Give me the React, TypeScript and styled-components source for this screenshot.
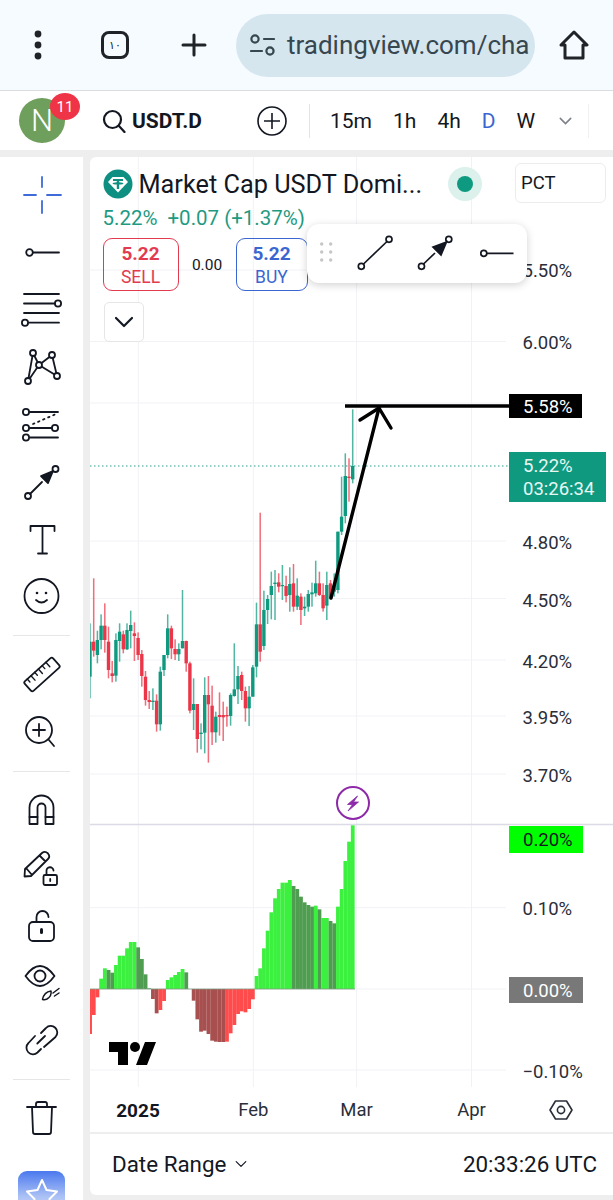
import React from "react";
import styled, { createGlobalStyle } from "styled-components";

const GlobalStyle = createGlobalStyle`
  html, body {
    margin: 0;
    width: 613px;
    height: 1200px;
    overflow: hidden;
    background: #eeeeee;
    font-family: Roboto, "Liberation Sans", sans-serif;
    color: #131722;
  }
`;

const Page = styled.div`
  width: 613px;
  height: 1200px;
  display: flex;
  flex-direction: column;
  overflow: hidden;
`;

/* browser chrome */
const BrowserBar = styled.div`
  height: 91px;
  flex: none;
  box-sizing: border-box;
  background: #f5fbff;
  border-bottom: 1px solid #d9dde0;
  display: flex;
  align-items: center;
`;

const ChromeIcon = styled.svg<{ $left?: number }>`
  flex: none;
  display: block;
  margin-left: ${(p) => p.$left ?? 0}px;
`;

const TabCount = styled.div`
  width: 28px;
  height: 28px;
  flex: none;
  margin-left: 56px;
  border: 3px solid #202428;
  border-radius: 8px;
  box-sizing: border-box;
  display: flex;
  align-items: center;
  justify-content: center;
  font-family: "DejaVu Sans", sans-serif;
  font-size: 11px;
  color: #202428;
`;

const UrlPill = styled.div`
  width: 299px;
  height: 63px;
  flex: none;
  margin-left: 29px;
  padding-left: 14px;
  box-sizing: border-box;
  border-radius: 32px;
  background: #d6e6ef;
  display: flex;
  align-items: center;
  gap: 12px;
`;

const UrlText = styled.span`
  font-size: 26px;
  color: #37474f;
  white-space: nowrap;
`;

/* chart header */
const HeaderBar = styled.div`
  height: 59px;
  flex: none;
  background: #ffffff;
  display: flex;
  align-items: center;
  position: relative;
`;

const Avatar = styled.div`
  width: 46px;
  height: 45px;
  margin-left: 19px;
  flex: none;
  border-radius: 50%;
  background: #6f9f5c;
  color: #ffffff;
  font-size: 31px;
  font-weight: 300;
  display: flex;
  align-items: center;
  justify-content: center;
  position: relative;
`;

const Badge = styled.span`
  position: absolute;
  left: 31px;
  top: -5px;
  width: 30px;
  height: 27px;
  border-radius: 50%;
  background: #ee3446;
  font-size: 15px;
  font-weight: 400;
  display: flex;
  align-items: center;
  justify-content: center;
`;

const SymbolText = styled.span`
  font-size: 21px;
  font-weight: 700;
  margin-left: 6px;
  width: 73px;
`;

const HeaderDivider = styled.span<{ $left: number; $tone: string }>`
  width: 1px;
  height: 34px;
  flex: none;
  margin-left: ${(p) => p.$left}px;
  background: ${(p) => p.$tone};
`;

const Intervals = styled.div`
  display: flex;
  gap: 21px;
  margin-left: 20px;
`;

const Interval = styled.span<{ $active?: boolean }>`
  font-size: 21px;
  color: ${(p) => (p.$active ? "#3b66d0" : "#131722")};
`;

const Gutter = styled.div`
  height: 7px;
  flex: none;
  background: #eeeeee;
`;

const Body = styled.div`
  flex: 1;
  display: flex;
  min-height: 0;
`;

/* left drawing tools */
const Sidebar = styled.div`
  width: 83px;
  flex: none;
  background: #ffffff;
  padding-top: 9px;
  box-sizing: border-box;
  display: flex;
  flex-direction: column;
`;

const ToolSlot = styled.div<{ $h: number }>`
  height: ${(p) => p.$h}px;
  flex: none;
  display: flex;
  align-items: center;
`;

const SideDivider = styled.div<{ $top: number; $bottom: number }>`
  height: 1px;
  flex: none;
  margin: ${(p) => p.$top}px 13px ${(p) => p.$bottom}px;
  background: #e6e6e6;
`;

const StarButton = styled.div`
  width: 47px;
  height: 50px;
  flex: none;
  margin: 24px 0 0 18px;
  border-radius: 9px;
  background: linear-gradient(180deg, #4a78ee 0%, #a9c0f5 50%, #e4ebfb 100%);
  display: flex;
  justify-content: center;
  padding-top: 7px;
  box-sizing: border-box;
`;

const ToolIcon = styled.svg.attrs({
  width: 83,
  height: 56,
  viewBox: "0 0 83 56",
  fill: "none",
  stroke: "#131722",
  strokeWidth: 1.8,
  strokeLinecap: "round",
  strokeLinejoin: "round",
})`
  display: block;
`;

/* chart */
const ChartColumn = styled.div`
  flex: 1;
  margin-left: 7px;
  display: flex;
  flex-direction: column;
  min-width: 0;
`;

const ChartCanvas = styled.div`
  height: 975px;
  flex: none;
  position: relative;
  background: #ffffff;
  border-top-left-radius: 6px;
  overflow: hidden;
`;

const ChartSvg = styled.svg`
  position: absolute;
  inset: 0;
  display: block;
`;

const Legend = styled.div`
  position: absolute;
  left: 12.5px;
  top: 12px;
  display: flex;
  flex-direction: column;
`;

const TitleRow = styled.div`
  height: 30px;
  display: flex;
  align-items: center;
  gap: 6px;
`;

const TitleText = styled.span`
  width: 283px;
  font-size: 25.3px;
  white-space: nowrap;
`;

const StatusHalo = styled.span`
  width: 34px;
  height: 34px;
  margin-left: 20px;
  border-radius: 50%;
  background: #dcf0ec;
  display: flex;
  align-items: center;
  justify-content: center;
`;

const StatusDot = styled.span`
  width: 16px;
  height: 16px;
  border-radius: 50%;
  background: #0e9a81;
`;

const Values = styled.div`
  height: 24px;
  margin-top: 7px;
  font-size: 20.5px;
  line-height: 24px;
  color: #1f9a82;
  display: flex;
  gap: 10px;
  white-space: nowrap;
`;

const TradeRow = styled.div`
  margin-top: 8px;
  display: flex;
  align-items: center;
`;

const TradeButton = styled.div<{ $tone: string; $width: number }>`
  width: ${(p) => p.$width}px;
  height: 53px;
  box-sizing: border-box;
  border: 1.3px solid ${(p) => p.$tone};
  border-radius: 9px;
  color: ${(p) => p.$tone};
  display: flex;
  flex-direction: column;
  align-items: center;
  justify-content: center;
  gap: 3px;
`;

const TradePrice = styled.span`
  font-size: 19px;
  line-height: 21px;
  font-weight: 700;
`;

const TradeSide = styled.span`
  font-size: 17.5px;
  line-height: 20px;
`;

const Spread = styled.span`
  width: 57px;
  text-align: center;
  font-size: 15.5px;
`;

const CollapseButton = styled.div`
  width: 40px;
  height: 40px;
  margin: 11px 0 0 1px;
  box-sizing: border-box;
  border: 1px solid #e6e6e6;
  border-radius: 5px;
  background: #ffffff;
  display: flex;
  align-items: center;
  justify-content: center;
`;

const ScaleButton = styled.div`
  position: absolute;
  left: 425px;
  top: 6px;
  width: 91px;
  height: 40px;
  box-sizing: border-box;
  padding-left: 5px;
  border: 1px solid #ececec;
  border-radius: 6px;
  background: #ffffff;
  font-size: 18.5px;
  display: flex;
  align-items: center;
`;

const FloatingTools = styled.div`
  position: absolute;
  left: 217px;
  top: 67px;
  width: 220px;
  height: 59px;
  border-radius: 12px;
  background: #ffffff;
  box-shadow: 0 2px 8px rgba(0, 0, 0, 0.18);
  display: flex;
  align-items: center;
`;

const PriceLabel = styled.span<{ $top: number }>`
  position: absolute;
  left: 432.5px;
  top: ${(p) => p.$top}px;
  transform: translateY(-50%);
  font-size: 18.5px;
  line-height: 22px;
  color: #2a2e39;
`;

const PriceTag = styled.div<{ $top: number; $height: number; $width: number; $bg: string; $fg: string }>`
  position: absolute;
  left: 419px;
  top: ${(p) => p.$top}px;
  width: ${(p) => p.$width}px;
  height: ${(p) => p.$height}px;
  box-sizing: border-box;
  padding: 1.5px 0 0 14px;
  background: ${(p) => p.$bg};
  color: ${(p) => p.$fg};
  font-size: 18.5px;
  line-height: 22.5px;
  display: flex;
  flex-direction: column;
  justify-content: center;
`;

const TimeLabel = styled.span<{ $left: number; $bold?: boolean }>`
  position: absolute;
  left: ${(p) => p.$left}px;
  top: 953px;
  transform: translate(-50%, -50%);
  font-size: ${(p) => (p.$bold ? 19 : 18.5)}px;
  font-weight: ${(p) => (p.$bold ? 700 : 400)};
  color: ${(p) => (p.$bold ? "#131722" : "#2a2e39")};
`;

const AxisSettings = styled.svg`
  position: absolute;
  left: 459px;
  top: 943px;
  display: block;
`;

const BottomBar = styled.div`
  height: 61px;
  flex: none;
  margin-top: 2px;
  padding: 0 16px 2px 22px;
  box-sizing: border-box;
  background: #ffffff;
  border-radius: 0 0 0 6px;
  display: flex;
  align-items: center;
  justify-content: space-between;
  font-size: 22.4px;
`;

const DateRange = styled.span`
  display: flex;
  align-items: center;
  gap: 9px;
`;

// zoomed-in coordinates of the candles: [wick top, wick bottom, body top, body bottom, up]
// page y = 560 + v / 3
const candles: [number, number, number, number, number][] = [
  [190, 415, 245, 350, 1], [55, 290, 245, 272, 0], [212, 310, 240, 285, 1], [163, 268, 197, 240, 1],
  [130, 278, 197, 240, 0], [200, 355, 245, 330, 0], [303, 367, 340, 348, 0], [220, 365, 240, 347, 1],
  [190, 305, 215, 243, 1], [212, 280, 223, 268, 0], [190, 270, 210, 268, 1], [152, 265, 195, 213, 1],
  [187, 303, 220, 228, 0], [217, 300, 234, 285, 0], [270, 380, 282, 348, 0], [333, 437, 350, 420, 0],
  [393, 447, 420, 426, 0], [385, 450, 422, 426, 1], [403, 515, 422, 493, 0], [320, 512, 335, 493, 1],
  [285, 348, 285, 330, 1], [163, 295, 205, 285, 1], [197, 297, 205, 265, 0], [238, 300, 267, 283, 0],
  [250, 303, 267, 283, 1], [90, 265, 243, 265, 1], [242, 335, 243, 310, 0], [305, 460, 310, 452, 0],
  [355, 510, 432, 450, 1], [432, 578, 432, 537, 0], [490, 568, 518, 522, 1], [352, 580, 405, 518, 1],
  [348, 608, 405, 433, 0], [377, 555, 437, 517, 0], [455, 548, 470, 517, 1], [397, 527, 465, 471, 0],
  [425, 543, 465, 472, 0], [440, 500, 465, 469, 0], [400, 497, 405, 468, 1], [250, 410, 388, 408, 1],
  [318, 432, 348, 388, 1], [335, 420, 345, 393, 0], [380, 485, 393, 445, 0], [378, 498, 410, 445, 1],
  [315, 410, 322, 410, 1], [128, 352, 193, 320, 1], [-142, 305, 193, 275, 0], [92, 270, 150, 258, 1],
  [105, 192, 117, 150, 1], [35, 178, 78, 105, 1], [30, 180, 68, 72, 1], [40, 97, 67, 80, 0],
  [15, 120, 75, 78, 1], [47, 127, 78, 108, 0], [22, 155, 72, 105, 1], [12, 155, 70, 140, 0],
  [55, 150, 107, 140, 1], [100, 195, 110, 150, 0], [110, 168, 140, 145, 1], [90, 155, 102, 140, 1],
  [68, 140, 97, 103, 1], [2, 110, 70, 100, 1], [35, 108, 70, 105, 0], [70, 155, 105, 145, 0],
  [35, 180, 75, 137, 1], [60, 118, 70, 115, 0], [40, 110, 75, 95, 1], [-85, 100, -85, 90, 1],
  [-250, -75, -130, -85, 1], [-320, -110, -252, -132, 1], [-305, -175, -250, -246, 0], [-452, -230, -282, -242, 1],
];

// histogram bar ends, same kind of zoomed coordinates: page y = 790 + v / 3, zero line at 597
const histogram = [
  732, 675, 622, 566, 535, 540, 548, 525, 497, 497, 475, 456, 456, 472, 507, 553, 595, 627, 670, 660, 633, 570, 562, 555,
  546, 537, 547, 597, 632, 688, 725, 722, 732, 752, 755, 756, 756, 755, 730, 705, 672, 664, 667, 657, 628, 558, 535, 475,
  422, 367, 325, 297, 278, 278, 270, 288, 297, 320, 337, 345, 350, 347, 358, 384, 384, 393, 400, 350, 297, 213, 155, 106,
];
const fadedBars = new Set([5, 6, 13, 14, 15, 16, 17, 18, 26, 28, 29, 30, 31, 32, 33, 34, 35, 36, 55, 56, 57, 58, 59, 60, 62, 65, 66]);

const barX = (i: number) => 90 + i * 3.7;
const GREEN = "#0f9a80";
const RED = "#ea3648";

const priceGrid = [270, 341.5, 403, 541, 598.5, 660, 716, 774, 907.7, 989, 1070];
const timeGrid = [138.3, 253.3, 356.6, 471.5];
const prices: [string, number][] = [
  ["5.50%", 270], ["6.00%", 341.5], ["4.80%", 542], ["4.50%", 600], ["4.20%", 661], ["3.95%", 717], ["3.70%", 775],
  ["0.10%", 908], ["−0.10%", 1071],
];

function ChartDrawing() {
  return (
    <ChartSvg width={523} height={975} viewBox="90 157 523 975">
      {priceGrid.map((y) => (
        <line key={y} x1={90} x2={506} y1={y} y2={y} stroke="#f1f2f5" />
      ))}
      {timeGrid.map((x) => (
        <line key={x} x1={x} x2={x} y1={157} y2={1087} stroke="#f1f2f5" />
      ))}
      <line x1={90} x2={613} y1={824.5} y2={824.5} stroke="#dcdce8" strokeWidth={1.5} />

      {candles.map(([wickTop, wickBottom, bodyTop, bodyBottom, up], i) => {
        const color = up ? GREEN : RED;
        const x = barX(i);
        const top = 560 + bodyTop / 3;
        return (
          <g key={i} fill={color}>
            <rect x={x - 0.75} width={1.5} y={560 + wickTop / 3} height={(wickBottom - wickTop) / 3} opacity={0.72} />
            <rect x={x - 1.7} width={3.4} y={top} height={Math.max((bodyBottom - bodyTop) / 3, 1.2)} />
          </g>
        );
      })}

      <line x1={90} x2={508} y1={466} y2={466} stroke="#2a9d8a" strokeDasharray="1.5 2.5" />

      {histogram.map((v, i) => {
        const up = v < 597;
        const faded = fadedBars.has(i);
        const y = 790 + v / 3;
        const color = up ? (faded ? "#4f9d50" : "#3cf03f") : faded ? "#a84f50" : "#ff4b4b";
        return (
          <rect
            key={i}
            x={barX(i) - 1.85}
            width={3.8}
            y={up ? y : 989}
            height={Math.abs(y - 989)}
            fill={color}
          />
        );
      })}
      <line x1={90} x2={355} y1={989} y2={989} stroke="#7f9a7f" strokeWidth={0.8} />

      {/* marks drawn by hand on the chart */}
      <g stroke="#000000" strokeWidth={3.4} fill="none" strokeLinecap="round" strokeLinejoin="round">
        <line x1={345} x2={510} y1={406} y2={406} strokeLinecap="butt" />
        <path d="M331 598 L379 408" />
        <path d="M360 420 L379 408 L391 428" />
      </g>

      <circle cx={353} cy={803} r={16} fill="#ffffff" stroke="#8e2aa8" strokeWidth={2} />
      <path d="M357.5 796 L347.5 804.5 H352.5 L348 811 L358.5 802 H353.5 Z" fill="#8e2aa8" stroke="#8e2aa8" strokeWidth={0.8} strokeLinejoin="round" />

      {/* TradingView mark */}
      <path d="M109 1042 H128 V1065 H118 V1052 H109 Z M145 1042 H156 L147 1065 H136 Z" fill="#000000" />
      <circle cx={135} cy={1047} r={5} fill="#000000" />
    </ChartSvg>
  );
}

function TetherIcon() {
  return (
    <svg width={30} height={30} viewBox="0 0 30 30">
      <circle cx={15} cy={15} r={14.5} fill="#0f8f82" />
      <path d="M9.5 8 H20.5 L25 13 L15 23.5 L5 13 Z" fill="#ffffff" />
      <path d="M10 10 H20 V12 H16.2 V13.2 C18.5 13.3 20.4 13.8 20.4 14.4 C20.4 15 18.5 15.5 16.2 15.6 V20 H13.8 V15.6 C11.5 15.5 9.6 15 9.6 14.4 C9.6 13.8 11.5 13.3 13.8 13.2 V12 H10 Z" fill="#0f8f82" />
    </svg>
  );
}

function Chevron({ size, width = 2 }: { size: number; width?: number }) {
  return (
    <svg width={size} height={size / 2 + 2} viewBox="0 0 20 12" fill="none" stroke="#131722" strokeWidth={width} strokeLinecap="round" strokeLinejoin="round">
      <path d="M2 2 L10 10 L18 2" />
    </svg>
  );
}

function ToolRail() {
  return (
    <Sidebar>
      <ToolSlot $h={57.4}>
        <ToolIcon>
          <path d="M42 10 V20 M42 34 V46 M24 28 H36 M47 28 H61" stroke="#3f6bd8" />
        </ToolIcon>
      </ToolSlot>
      <ToolSlot $h={57.4}>
        <ToolIcon>
          <circle cx={29.5} cy={28.5} r={3.3} />
          <path d="M33 28.5 H59" />
        </ToolIcon>
      </ToolSlot>
      <ToolSlot $h={57.4}>
        <ToolIcon>
          <path d="M24 13 H59 M24 22.5 H55 M24 32 H59 M29 41.7 H59" />
          <circle cx={58} cy={22.5} r={3.1} />
          <circle cx={25} cy={41.7} r={3.1} />
        </ToolIcon>
      </ToolSlot>
      <ToolSlot $h={57.4}>
        <ToolIcon>
          <path d="M33 14 L28 42 L39 26 L33 14 M39 26 L52 16 L57 37 L39 26" />
          <circle cx={33} cy={14} r={3} fill="#fff" />
          <circle cx={52} cy={16} r={3} fill="#fff" />
          <circle cx={28} cy={42} r={3} fill="#fff" />
          <circle cx={57} cy={37} r={3} fill="#fff" />
          <circle cx={39} cy={26} r={3} fill="#fff" />
        </ToolIcon>
      </ToolSlot>
      <ToolSlot $h={57.4}>
        <ToolIcon>
          <path d="M30 16 H58 M30 32 H52 M30 41.5 H58" />
          <path d="M33 28 L56 18" strokeDasharray="1.5 4" />
          <circle cx={26} cy={16} r={3.1} />
          <circle cx={26} cy={32} r={3.1} />
          <circle cx={55} cy={32} r={3.1} />
          <circle cx={26} cy={41.5} r={3.1} />
        </ToolIcon>
      </ToolSlot>
      <ToolSlot $h={57.4}>
        <ToolIcon>
          <path d="M30 40 L42 28" />
          <path d="M53 17 L41 22 L48 29 Z" fill="#131722" />
          <circle cx={28} cy={42} r={3} />
          <circle cx={55.5} cy={15} r={3} />
        </ToolIcon>
      </ToolSlot>
      <ToolSlot $h={57.4}>
        <ToolIcon strokeWidth={1.6}>
          <path d="M30.5 20 V15 H54.5 V20 M42.5 15 V42.5 M38 42.5 H47" />
        </ToolIcon>
      </ToolSlot>
      <ToolSlot $h={57.4}>
        <ToolIcon>
          <circle cx={41.5} cy={28} r={17} />
          <circle cx={37} cy={25} r={1.3} fill="#131722" stroke="none" />
          <circle cx={46} cy={25} r={1.3} fill="#131722" stroke="none" />
          <path d="M36 32 Q41.5 37 47 32" />
        </ToolIcon>
      </ToolSlot>
      <SideDivider $top={10} $bottom={10} />
      <ToolSlot $h={55}>
        <ToolIcon>
          <g transform="rotate(-42 42 28.5)">
            <rect x={23} y={22} width={38} height={13} rx={2} />
            <path d="M28 22 V26 M33 22 V28 M38 22 V26 M43 22 V28 M48 22 V26 M53 22 V28" strokeWidth={1.4} />
          </g>
        </ToolIcon>
      </ToolSlot>
      <ToolSlot $h={55}>
        <ToolIcon>
          <circle cx={39} cy={29} r={13} />
          <path d="M39 23 V35 M33 29 H45 M48.5 38.5 L54 45" />
        </ToolIcon>
      </ToolSlot>
      <SideDivider $top={15} $bottom={8} />
      <ToolSlot $h={58}>
        <ToolIcon>
          <path d="M29.5 43 V26.5 a12 12 0 0 1 24 0 V43 H45.5 V26.5 a4 4 0 0 0 -8 0 V43 Z" />
          <path d="M29.5 36 H37.5 M45.5 36 H53.5" />
        </ToolIcon>
      </ToolSlot>
      <ToolSlot $h={58}>
        <ToolIcon>
          <path d="M24.5 37.5 L25 30 L42 14 Q45 11.5 48 14.5 Q50.5 17.5 48 20 L31 37 Z M26.5 29.5 L32 36 M39.5 16.5 L45.5 22.5" />
          <rect x={43.5} y={36} width={13.5} height={10} rx={1.5} />
          <path d="M46.5 36 V32 a3.5 3.5 0 0 1 7 -0.5" />
          <path d="M50.2 40 V42" />
        </ToolIcon>
      </ToolSlot>
      <ToolSlot $h={58}>
        <ToolIcon>
          <rect x={29} y={25} width={25} height={19} rx={4} />
          <path d="M36.5 25 V20 a6 6 0 0 1 12 0" />
          <path d="M41.5 32.5 V35.5" strokeWidth={3} />
        </ToolIcon>
      </ToolSlot>
      <ToolSlot $h={58}>
        <ToolIcon>
          <path d="M25.5 21 Q40 1 54.5 21 Q40 41 25.5 21 Z" />
          <circle cx={40} cy={21} r={5.5} />
          <path d="M42.5 44.5 Q44 37 51 36 Q52 41 47 44 Q45 45 42.5 44.5 Z M53 38 L59 33.5 M54.5 41 L59 38" strokeWidth={1.5} />
        </ToolIcon>
      </ToolSlot>
      <ToolSlot $h={58}>
        <ToolIcon strokeWidth={1.6}>
          <path d="M41 20 L46 15 a6.5 6.5 0 0 1 9.5 9 L44 34" />
          <path d="M35 23 L28.5 30 a6.5 6.5 0 0 0 9 9.5 L41 36" />
          <path d="M37.3 30.5 L45 23" />
        </ToolIcon>
      </ToolSlot>
      <SideDivider $top={9} $bottom={9} />
      <ToolSlot $h={58}>
        <ToolIcon>
          <path d="M27 17 H56 M36 17 V14 Q36 12 38 12 H45 Q47 12 47 14 V17 M32 17 L33 42 Q33 44 35 44 H49 Q51 44 51 42 L52 17" />
        </ToolIcon>
      </ToolSlot>
      <StarButton>
        <svg width={34} height={32} viewBox="0 0 34 32" fill="none" stroke="#ffffff" strokeWidth={2} strokeLinejoin="round">
          <path d="M17 2 L21.5 12 L32 13.5 L24.5 21 L26.5 31 L17 26 L7.5 31 L9.5 21 L2 13.5 L12.5 12 Z" />
        </svg>
      </StarButton>
    </Sidebar>
  );
}

function App() {
  return (
    <Page>
      <GlobalStyle />
      <BrowserBar>
        <ChromeIcon $left={31} width={14} height={30} viewBox="0 0 14 30">
          <circle cx={7} cy={4} r={3.4} fill="#202428" />
          <circle cx={7} cy={15} r={3.4} fill="#202428" />
          <circle cx={7} cy={26} r={3.4} fill="#202428" />
        </ChromeIcon>
        <TabCount>١٠</TabCount>
        <ChromeIcon $left={52} width={26} height={24} viewBox="0 0 26 24" fill="none" stroke="#202428" strokeWidth={3} strokeLinecap="round">
          <path d="M13 2 V22 M2 12 H24" />
        </ChromeIcon>
        <UrlPill>
          <ChromeIcon width={25} height={22} viewBox="0 0 25 22" fill="none" stroke="#37474f" strokeWidth={2.2} strokeLinecap="round">
            <circle cx={5} cy={5} r={3.6} />
            <path d="M14 5 H24 M1 17 H12" />
            <circle cx={20} cy={17} r={3.6} />
          </ChromeIcon>
          <UrlText>tradingview.com/cha</UrlText>
        </UrlPill>
        <ChromeIcon $left={24} width={30} height={30} viewBox="0 0 30 30" fill="none" stroke="#202428" strokeWidth={3} strokeLinejoin="round">
          <path d="M15 2 L28 15 H24 V28 H6 V15 H2 Z" />
        </ChromeIcon>
      </BrowserBar>

      <HeaderBar>
        <Avatar>
          N<Badge>11</Badge>
        </Avatar>
        <ChromeIcon $left={37} width={24} height={24} viewBox="0 0 24 24" fill="none" stroke="#131722" strokeWidth={2.2} strokeLinecap="round">
          <circle cx={10.5} cy={10.5} r={8.5} />
          <path d="M17 17 L22.5 23" />
        </ChromeIcon>
        <SymbolText>USDT.D</SymbolText>
        <ChromeIcon $left={52} width={30} height={30} viewBox="0 0 30 30" fill="none" stroke="#131722" strokeWidth={1.6}>
          <circle cx={15} cy={15} r={14} />
          <path d="M15 7 V23 M7 15 H23" />
        </ChromeIcon>
        <HeaderDivider $left={22} $tone="#e3e3e3" />
        <Intervals>
          <Interval>15m</Interval>
          <Interval>1h</Interval>
          <Interval>4h</Interval>
          <Interval $active>D</Interval>
          <Interval>W</Interval>
        </Intervals>
        <ChromeIcon $left={24} width={13} height={8} viewBox="0 0 20 12" fill="none" stroke="#7d8088" strokeWidth={2.4} strokeLinecap="round">
          <path d="M2 2 L10 10 L18 2" />
        </ChromeIcon>
        <HeaderDivider $left={16} $tone="#f0f0f0" />
      </HeaderBar>
      <Gutter />

      <Body>
        <ToolRail />
        <ChartColumn>
          <ChartCanvas>
            <ChartDrawing />

            <Legend>
              <TitleRow>
                <TetherIcon />
                <TitleText>Market Cap USDT Domi...</TitleText>
                <StatusHalo>
                  <StatusDot />
                </StatusHalo>
              </TitleRow>
              <Values>
                <span>5.22%</span>
                <span>+0.07 (+1.37%)</span>
              </Values>
              <TradeRow>
                <TradeButton $tone="#e23b50" $width={76}>
                  <TradePrice>5.22</TradePrice>
                  <TradeSide>SELL</TradeSide>
                </TradeButton>
                <Spread>0.00</Spread>
                <TradeButton $tone="#3b66d0" $width={72}>
                  <TradePrice>5.22</TradePrice>
                  <TradeSide>BUY</TradeSide>
                </TradeButton>
              </TradeRow>
              <CollapseButton>
                <Chevron size={20} width={2.2} />
              </CollapseButton>
            </Legend>

            {prices.map(([label, y]) => (
              <PriceLabel key={label} $top={y - 156}>
                {label}
              </PriceLabel>
            ))}

            <ScaleButton>PCT</ScaleButton>

            <FloatingTools>
              <svg width={37} height={59} viewBox="0 0 37 59" fill="#c6c6c6">
                {[14.7, 23.7].map((x) =>
                  [20, 28, 36].map((y) => <circle key={`${x}-${y}`} cx={x} cy={y} r={1.7} />)
                )}
              </svg>
              <svg width={61} height={59} viewBox="0 0 61 59" fill="none" stroke="#131722" strokeWidth={1.7}>
                <path d="M19.5 40 L43 17.5" />
                <circle cx={17.3} cy={42.3} r={3} />
                <circle cx={45} cy={15.3} r={3} />
              </svg>
              <svg width={61} height={59} viewBox="0 0 61 59" fill="none" stroke="#131722" strokeWidth={1.7}>
                <path d="M18.5 40 L30 29" />
                <path d="M41.5 18 L28 23 L36 31 Z" fill="#131722" />
                <circle cx={16.5} cy={42.3} r={3} />
                <circle cx={43.8} cy={15.3} r={3} />
              </svg>
              <svg width={61} height={59} viewBox="0 0 61 59" fill="none" stroke="#131722" strokeWidth={1.7}>
                <circle cx={17.8} cy={29.3} r={3} />
                <path d="M21 29.3 H47.5" />
              </svg>
            </FloatingTools>

            <PriceTag $top={237} $height={24} $width={73} $bg="#000000" $fg="#ffffff">
              5.58%
            </PriceTag>
            <PriceTag $top={295} $height={50} $width={97} $bg="#0f9a80" $fg="#e8f7f3">
              <span>5.22%</span>
              <span>03:26:34</span>
            </PriceTag>
            <PriceTag $top={669} $height={27} $width={74} $bg="#00ff00" $fg="#131722">
              0.20%
            </PriceTag>
            <PriceTag $top={820} $height={26} $width={74} $bg="#787878" $fg="#ffffff">
              0.00%
            </PriceTag>

            <TimeLabel $left={48} $bold>2025</TimeLabel>
            <TimeLabel $left={163.3}>Feb</TimeLabel>
            <TimeLabel $left={266.6}>Mar</TimeLabel>
            <TimeLabel $left={381.5}>Apr</TimeLabel>
            <AxisSettings width={24} height={20} viewBox="0 0 24 20" fill="none" stroke="#2a2e39" strokeWidth={1.6} strokeLinejoin="round">
              <path d="M6.5 1 H17.5 L23 10 L17.5 19 H6.5 L1 10 Z" />
              <circle cx={12} cy={10} r={3.6} />
            </AxisSettings>
          </ChartCanvas>
          <BottomBar>
            <DateRange>
              Date Range
              <Chevron size={12} width={2} />
            </DateRange>
            <span>20:33:26 UTC</span>
          </BottomBar>
        </ChartColumn>
      </Body>
    </Page>
  );
}

export default App;
